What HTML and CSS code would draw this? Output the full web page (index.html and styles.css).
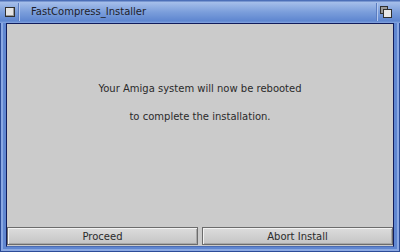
FILE: index.html
```html
<!DOCTYPE html>
<html>

<head>
    <meta charset="utf-8">
    <title>FastCompress_Installer</title>
    <link rel="stylesheet" href="styles.css">
</head>

<body>
    <div class="window">
        <div class="titlebar">
            <div class="gadget close"><span class="box"></span></div>
            <div class="title">FastCompress_Installer</div>
            <div class="gadget depth">
                <svg width="12" height="12" viewBox="0 0 12 12">
                    <rect x="0.5" y="0.5" width="7" height="7" fill="#9a9a9a" stroke="#303030"/>
                    <rect x="3.5" y="3.5" width="8" height="8" fill="#e8e8e8" stroke="#303030"/>
                </svg>
            </div>
        </div>
        <div class="body">
            <div class="message">
                <p>Your Amiga system will now be rebooted</p>
                <p>to complete the installation.</p>
            </div>
            <div class="buttons">
                <button>Proceed</button>
                <button>Abort Install</button>
            </div>
        </div>
    </div>
</body>

</html>
```
FILE: styles.css
```css
* {
    box-sizing: border-box;
}

html,
body {
    margin: 0;
    padding: 0;
}

body {
    font-family: "DejaVu Sans", sans-serif;
    font-size: 10px;
    color: #2a2a2a;
}

.window {
    width: 400px;
    height: 252px;
    display: flex;
    flex-direction: column;
    background: #5f86d0;
    box-shadow: inset 0 0 0 1px #2c4c98, inset 0 0 0 3px #8aa8e2;
    padding: 0 6px 5px;
}

.titlebar {
    height: 23px;
    margin: 0 -6px;
    display: flex;
    align-items: center;
    background: linear-gradient(#4c6fb8 0, #4c6fb8 1px, #a6bfea 2px, #7b9edb 12px, #5e86d0 21px, #86a6e0 23px);
    padding: 0 6px 0 4px;
}

.gadget {
    height: 18px;
    display: flex;
    align-items: center;
}

.close {
    width: 15px;
    border-right: 1px solid #5a7cc0;
    box-shadow: 1px 0 0 #b4c8ee;
    margin-right: 12px;
}

.close .box {
    display: block;
    width: 10px;
    height: 10px;
    margin-left: 1px;
    background: #e4e4e4;
    border: 1px solid #303030;
    box-shadow: inset -1px -1px 0 #9a9a9a;
}

.title {
    flex: 1;
    color: #1e1e2a;
}

.depth {
    width: 16px;
    justify-content: flex-end;
    border-left: 1px solid #5a7cc0;
    box-shadow: inset 1px 0 0 #b4c8ee;
    margin-right: 2px;
}

.body {
    flex: 1;
    display: flex;
    flex-direction: column;
    background: #cbcbcb;
    border: 1px solid #101c5c;
    border-bottom-color: #4a6cb4;
}

.message {
    flex: 1;
    text-align: center;
    padding-top: 58px;
}

.message p {
    margin: 0 0 15px;
    line-height: 13px;
}

.buttons {
    display: grid;
    grid-template-columns: 1fr 1fr;
    gap: 4px;
    padding: 0 0 1px;
}

button {
    height: 18px;
    margin: 0;
    padding: 0;
    font-family: "DejaVu Sans", sans-serif;
    font-size: 10px;
    color: #2a2a2a;
    background: linear-gradient(#dcdcdc, #c4c4c4);
    border: 1px solid #6c6c6c;
    box-shadow: inset 1px 1px 0 #f2f2f2, inset -1px -1px 0 #a8a8a8;
}
```
